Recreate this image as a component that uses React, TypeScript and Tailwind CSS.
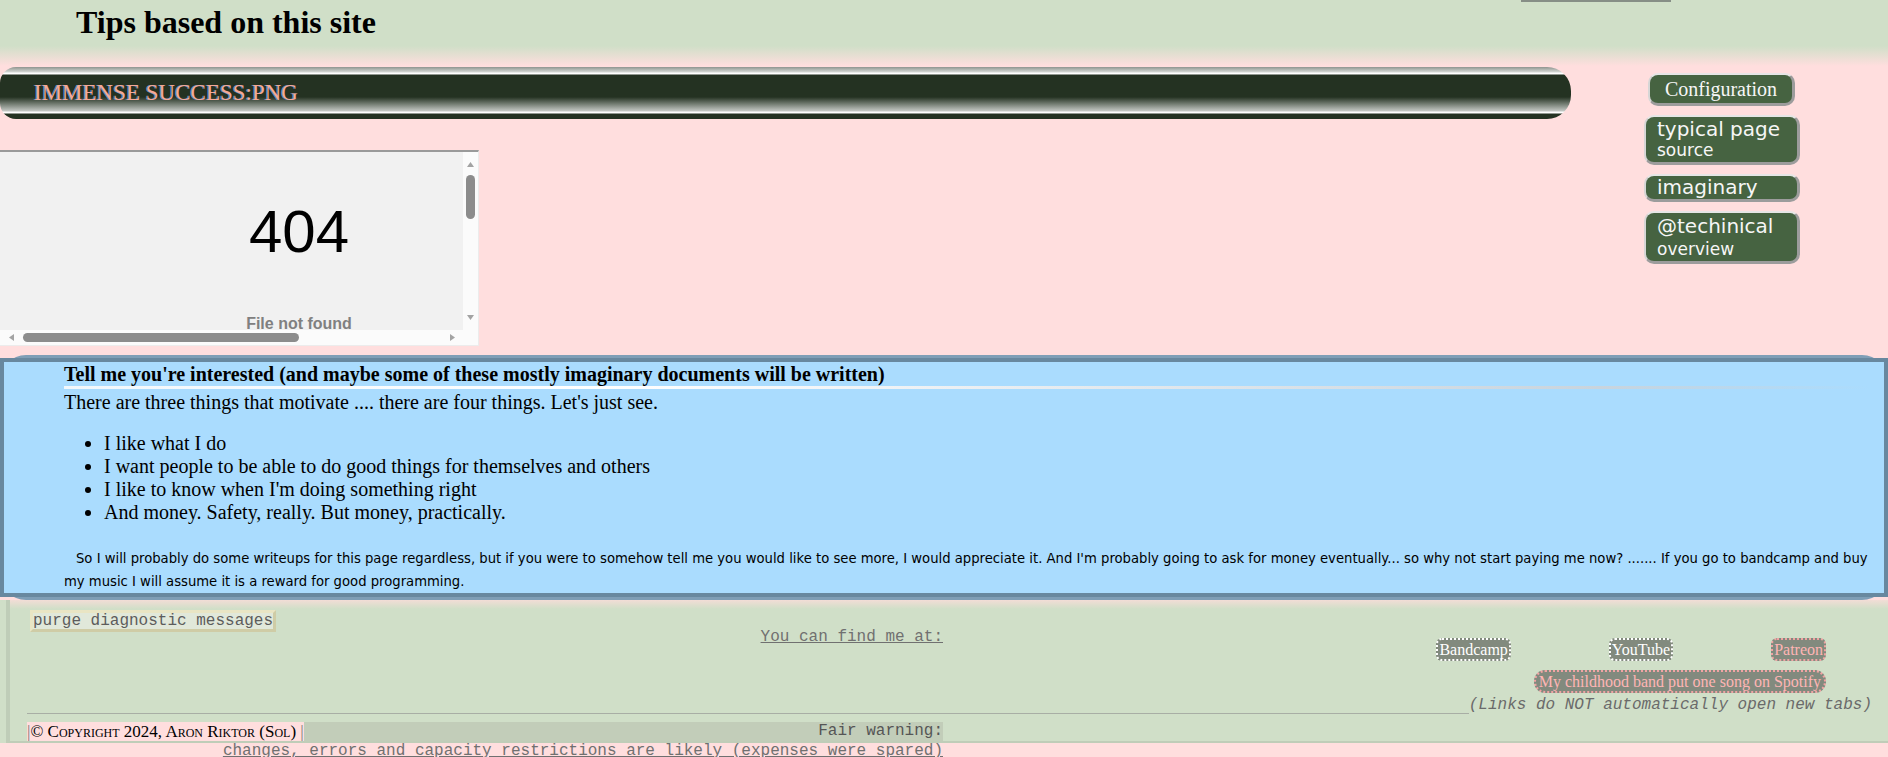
import type { ReactNode } from 'react';

const navButton =
  'rounded-[10px] border-2 border-b-[3px] border-r-[3px] border-t-[#e6e6e6] border-l-[#d6d6d6] border-r-[#9c9c9c] border-b-[#9c9c9c] bg-[#466341] text-[#f6f6f6]';

function LinkButton({ children, pink = false }: { children: ReactNode; pink?: boolean }) {
  return (
    <a
      className={
        pink
          ? 'rounded-[6px] border-2 border-dotted border-[#f1a3a3] bg-[#828a7e] px-[1px] text-[16px] leading-[19px] text-[#ffb5b5]'
          : 'rounded-[6px] border-2 border-dotted border-white bg-[#828a7e] px-[1px] text-[16px] leading-[19px] text-white'
      }
    >
      {children}
    </a>
  );
}

function Arrow({ dir }: { dir: 'up' | 'down' | 'left' | 'right' }) {
  const points = {
    up: '0,5 3.5,0 7,5',
    down: '0,0 7,0 3.5,5',
    left: '5,0 5,7 0,3.5',
    right: '0,0 5,3.5 0,7',
  }[dir];
  const vertical = dir === 'up' || dir === 'down';
  return (
    <svg width={vertical ? 7 : 5} height={vertical ? 5 : 7} className="block">
      <polygon points={points} fill="#a3a3a3" />
    </svg>
  );
}

function BrokenFrame() {
  return (
    <div className="mt-[31px] w-[479px] border-t-2 border-r border-b border-[#9a9a9a] border-r-[#ececec] border-b-[#ececec] bg-[#fbfbfb]">
      <div className="flex h-[178px]">
        <div className="w-[463px] overflow-hidden bg-[#f1f1f1]">
          <div className="w-[598px] text-center font-['Liberation_Sans',sans-serif]">
            <div className="pt-[50px] text-[60px] leading-[60px] text-black">404</div>
            <div className="mt-[52px] text-[16px] font-bold leading-[20px] text-[#808080]">File not found</div>
          </div>
        </div>
        <div className="flex w-[15px] flex-col items-center">
          <div className="mt-[10px]">
            <Arrow dir="up" />
          </div>
          <div className="mt-[8px] h-[44px] w-[9px] rounded-full bg-[#8c8c8c]" />
          <div className="mt-[96px]">
            <Arrow dir="down" />
          </div>
        </div>
      </div>
      <div className="flex h-[15px] w-[463px] items-center">
        <div className="ml-[9px]">
          <Arrow dir="left" />
        </div>
        <div className="ml-[9px] h-[9px] w-[276px] rounded-full bg-[#8c8c8c]" />
        <div className="ml-[151px]">
          <Arrow dir="right" />
        </div>
      </div>
    </div>
  );
}

export default function App() {
  return (
    <div className="min-h-screen overflow-hidden bg-[#ffdede] font-['Liberation_Serif',serif] text-black">
      <header className="flex h-[66px] justify-between bg-[linear-gradient(180deg,#d0dfc8_0px,#d0dfc8_46px,#ffdede_66px)]">
        <h1 className="pl-[76px] pt-[3px] text-[32px] font-bold leading-[38px]">Tips based on this site</h1>
        <div className="mr-[217px] h-[2px] w-[150px] bg-[#868e86]" />
      </header>

      <div className="flex">
        <div className="w-[1571px] shrink-0">
          <div className="mt-[1px] flex h-[52px] items-center rounded-l-[16px] rounded-r-[24px] bg-[linear-gradient(180deg,#8f948f_0px,#d4d8d4_5px,#ffffff_6px,#ffffff_7px,#243222_8px,#243222_30px,#c4c8c4_44px,#ffffff_45px,#ffffff_46px,#243222_47px)] pl-[34px] text-[23px] text-[#f3a999] [text-shadow:-1px_0_#5d93d4]">
            IMMENSE SUCCESS:PNG
          </div>
          <BrokenFrame />
        </div>

        <nav className="ml-[73px] mt-[7px] flex w-[156px] flex-col gap-[9px]">
          <a className={`${navButton} ml-[4px] h-[33px] w-[147px] text-center text-[20px] leading-[28px]`}>Configuration</a>
          <a className={`${navButton} h-[50px] pl-[11px] font-['DejaVu_Sans',sans-serif]`}>
            <div className="text-[20px] leading-[24px]">typical page</div>
            <div className="text-[17px] leading-[19px]">source</div>
          </a>
          <a className={`${navButton} h-[28px] pl-[11px] font-['DejaVu_Sans',sans-serif] text-[20px] leading-[22px]`}>imaginary</a>
          <a className={`${navButton} h-[53px] pl-[11px] font-['DejaVu_Sans',sans-serif]`}>
            <div className="text-[20px] leading-[26px]">@techinical</div>
            <div className="text-[17px] leading-[20px]">overview</div>
          </a>
        </nav>
      </div>

      <section className="mt-[9px] rounded-[26px] border-y-[3px] border-[#7f9eb6]">
        <div className="border-4 border-[#68889f] bg-[#aadcfe] pl-[60px] pr-[14px]">
          <h3 className="text-[20px] font-bold leading-[24px]">
            Tell me you&apos;re interested (and maybe some of these mostly imaginary documents will be written)
          </h3>
          <div className="h-[3px] bg-[linear-gradient(90deg,#f2f7fb,#ffffff_30%,#c9d4dd_85%,rgba(255,255,255,0))]" />
          <p className="mt-[1px] text-[20px] leading-[24px]">
            There are three things that motivate .... there are four things. Let&apos;s just see.
          </p>
          <ul className="mt-[18px] list-disc pl-[40px] text-[20px] leading-[23px]">
            <li>I like what I do</li>
            <li>I want people to be able to do good things for themselves and others</li>
            <li>I like to know when I&apos;m doing something right</li>
            <li>And money. Safety, really. But money, practically.</li>
          </ul>
          <p className="mt-[23px] overflow-hidden font-['DejaVu_Sans',sans-serif] text-[13.2px] leading-[23px]">
            <span className="block whitespace-nowrap pl-[12px]">
              So I will probably do some writeups for this page regardless, but if you were to somehow tell me you would like to see more, I would appreciate it. And I&apos;m probably going to ask for money eventually... so why not start paying me now? ....... If you go to bandcamp and buy
            </span>
            <span className="block">my music I will assume it is a reward for good programming.</span>
          </p>
        </div>
      </section>

      <footer className="bg-[#d0dfc8] pl-[6px]">
        <div className="border-b-2 border-l-4 border-[#bfcdb8] bg-[linear-gradient(180deg,#f2ddd6_0px,#d0dfc8_9px)] pl-[17px] font-['Liberation_Mono',monospace] text-[16px]">
          <div className="grid grid-cols-[916px_1fr]">
            <div className="flex flex-col items-start">
              <button className="ml-[3px] mt-[10px] h-[22px] border-[3px] border-t-[#e9e5c4] border-l-[#e9e5c4] border-r-[#cfcca6] border-b-[#cfcca6] bg-[#e1e8da] px-0 leading-[16px] text-[#5c5c5c]">
                purge diagnostic messages
              </button>
              <a className="-mt-[4px] self-end leading-[18px] text-[#707070] underline">You can find me at:</a>
            </div>
            <div className="flex flex-col items-end pr-[62px] pt-[38px] font-['Liberation_Serif',serif]">
              <div className="flex gap-[98px]">
                <LinkButton>Bandcamp</LinkButton>
                <LinkButton>YouTube</LinkButton>
                <LinkButton pink>Patreon</LinkButton>
              </div>
              <a className="mt-[9px] rounded-[11px] border-2 border-dotted border-[#f1a3a3] bg-[#828a7e] px-[3px] text-[16px] leading-[19px] text-[#ffb5b5]">
                My childhood band put one song on Spotify
              </a>
            </div>
          </div>

          <div className="mt-[3px] flex items-end pr-[16px]">
            <div className="h-[18px] flex-1 border-b border-[#a8aea5]" />
            <span className="italic leading-[18px] text-[#6a6a6a]">(Links do NOT automatically open new tabs)</span>
          </div>

          <div className="mt-[8px] grid grid-cols-[916px_1fr]">
            <div className="flex h-[19px]">
              <span className="bg-[#ffdede] font-['Liberation_Serif',serif] text-[17px] leading-[19px] [font-variant:small-caps]">
                <span className="text-[#777]">|</span>© Copyright 2024, Aron Riktor (Sol) <span className="text-[#777]">|</span>
              </span>
              <div className="flex-1 bg-[#c2cdb9] text-right leading-[19px] text-[#555]">Fair warning:</div>
            </div>
            <div />
          </div>
        </div>
      </footer>

      <div className="w-[943px] text-right font-['Liberation_Mono',monospace] text-[16px] leading-[16px] text-[#707070] underline">
        changes, errors and capacity_restrictions are likely (expenses were spared)
      </div>
    </div>
  );
}
